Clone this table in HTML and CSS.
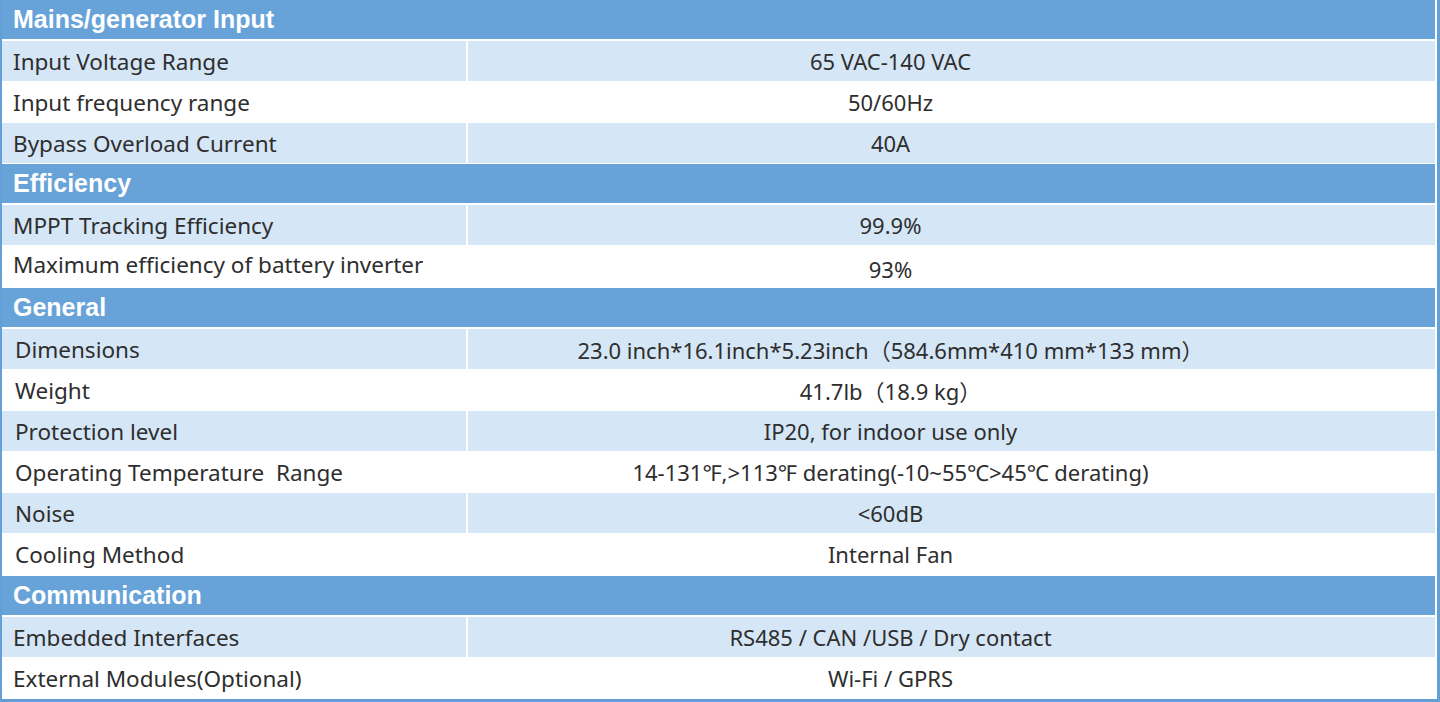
FILE: index.html
```html
<!DOCTYPE html>
<html lang="en">
<head>
<meta charset="utf-8">
<title>Specifications</title>
<link rel="stylesheet" href="styles.css">
</head>
<body>
<div class="spec">
  <div class="sec-head">Mains/generator Input</div>
  <div class="row light"><div class="lbl">Input Voltage Range</div><div class="val">65 VAC-140 VAC</div></div>
  <div class="row white"><div class="lbl">Input frequency range</div><div class="val">50/60Hz</div></div>
  <div class="row light"><div class="lbl">Bypass Overload Current</div><div class="val">40A</div></div>

  <div class="sec-head">Efficiency</div>
  <div class="row light"><div class="lbl">MPPT Tracking Efficiency</div><div class="val">99.9%</div></div>
  <div class="row white"><div class="lbl up">Maximum efficiency of battery inverter</div><div class="val down">93%</div></div>

  <div class="sec-head">General</div>
  <div class="row light indent"><div class="lbl">Dimensions</div><div class="val">23.0 inch*16.1inch*5.23inch（584.6mm*410 mm*133 mm）</div></div>
  <div class="row white indent"><div class="lbl">Weight</div><div class="val">41.7lb（18.9 kg）</div></div>
  <div class="row light indent"><div class="lbl">Protection level</div><div class="val">IP20, for indoor use only</div></div>
  <div class="row white indent"><div class="lbl">Operating Temperature&nbsp; Range</div><div class="val">14-131℉,&gt;113℉ derating(-10~55℃&gt;45℃ derating)</div></div>
  <div class="row light indent"><div class="lbl">Noise</div><div class="val">&lt;60dB</div></div>
  <div class="row white indent"><div class="lbl">Cooling Method</div><div class="val">Internal Fan</div></div>

  <div class="sec-head">Communication</div>
  <div class="row light"><div class="lbl">Embedded Interfaces</div><div class="val">RS485 / CAN /USB / Dry contact</div></div>
  <div class="row white"><div class="lbl">External Modules(Optional)</div><div class="val">Wi-Fi / GPRS</div></div>
</div>
</body>
</html>
```

FILE: styles.css
```css
html, body {
  margin: 0;
  padding: 0;
  background: #ffffff;
}

.spec {
  width: 1440px;
  height: 702px;
  box-sizing: border-box;
  border-left: 2px solid #62a0d7;
  border-right: 3px solid #62a0d7;
  border-bottom: 3px solid #62a0d7;
  padding-right: 2px;
  background: #ffffff;
  display: flex;
  flex-direction: column;
  overflow: hidden;
}

.sec-head {
  flex: none;
  height: 39px;
  margin-bottom: 2px;
  padding-left: 11px;
  background: #67a3d9;
  color: #ffffff;
  font-family: "Liberation Sans", Arial, sans-serif;
  font-weight: bold;
  font-size: 25px;
  display: flex;
  align-items: center;
}

.row + .sec-head {
  margin-top: 1px;
}

.row {
  flex: none;
  display: grid;
  grid-template-columns: 464px 1fr;
  column-gap: 2px;
  height: 40px;
  font-family: "Noto Sans", "Open Sans", "Noto Sans CJK SC", sans-serif;
  color: #2e2e2e;
}

.row.white {
  height: 42px;
}

.row.light .lbl,
.row.light .val {
  background: #d5e6f6;
}

.lbl {
  display: flex;
  align-items: center;
  padding-left: 11px;
  font-size: 22.5px;
  white-space: nowrap;
}

.indent .lbl {
  padding-left: 13px;
}

.val {
  display: flex;
  align-items: center;
  justify-content: center;
  padding-right: 122px;
  font-size: 22px;
  white-space: nowrap;
}

.up {
  padding-bottom: 4px;
}

.down {
  padding-top: 6px;
}
```
